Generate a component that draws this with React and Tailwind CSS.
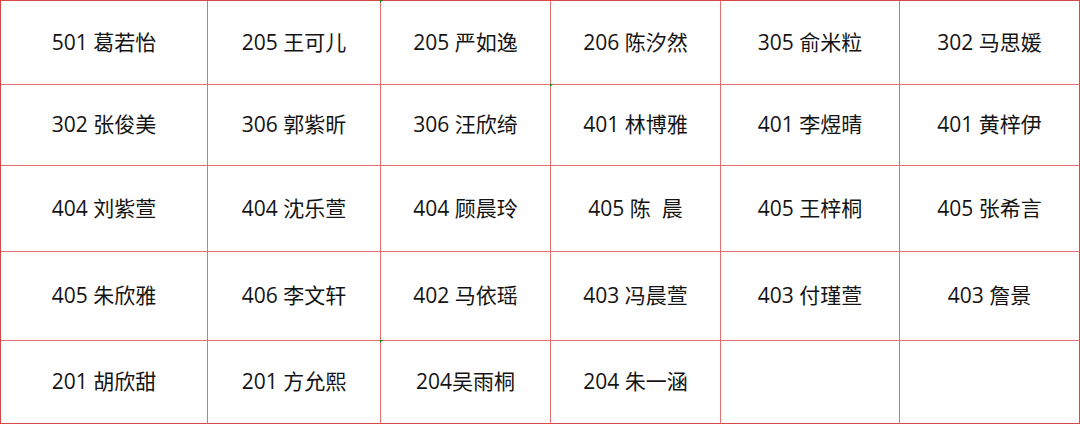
import React from 'react';

const rows = [
  ['501 葛若怡', '205 王可儿', '205 严如逸', '206 陈汐然', '305 俞米粒', '302 马思媛'],
  ['302 张俊美', '306 郭紫昕', '306 汪欣绮', '401 林博雅', '401 李煜晴', '401 黄梓伊'],
  ['404 刘紫萱', '404 沈乐萱', '404 顾晨玲', '405 陈  晨', '405 王梓桐', '405 张希言'],
  ['405 朱欣雅', '406 李文轩', '402 马依瑶', '403 冯晨萱', '403 付瑾萱', '403 詹景'],
  ['201 胡欣甜', '201 方允熙', '204吴雨桐', '204 朱一涵', '', ''],
];

// little green corner marks seen in the source sheet
const marks = ['0-2', '1-3', '4-2'];

const App = () => {
  return (
    <div
      className="w-[1080px] h-[424px] bg-white border-l border-t border-[#d94848] grid grid-cols-[207px_173px_170px_170px_179px_180px] grid-rows-[84px_81px_86px_89px_83px] text-[21px] text-[#141414]"
      style={{ fontFamily: '"Segoe UI", "Open Sans", "Noto Sans CJK SC", sans-serif' }}
    >
      {rows.map((row, r) =>
        row.map((name, c) => (
          <div
            key={`${r}-${c}`}
            className={`relative flex items-center justify-center whitespace-pre border-r border-b ${
              c === 5 ? 'border-r-[#d94848]' : 'border-r-[#e36f6f]'
            } ${r === 4 ? 'border-b-[#d94848]' : 'border-b-[#e36f6f]'}`}
          >
            {marks.includes(`${r}-${c}`) && (
              <span className="absolute -top-px -left-px w-0 h-0 border-t-[3px] border-r-[3px] border-t-[#1a8a1a] border-r-transparent" />
            )}
            {name}
          </div>
        ))
      )}
    </div>
  );
};

export default App;
